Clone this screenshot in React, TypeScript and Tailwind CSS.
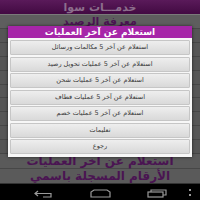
import React from "react";

const F = { fontFamily: '"DejaVu Sans", sans-serif' };

const buttons = [
  "استعلام عن آخر 5 مكالمات ورسائل",
  "استعلام عن آخر 5 عمليات تحويل رصيد",
  "استعلام عن آخر 5 عمليات شحن",
  "استعلام عن آخر 5 عمليات قطاف",
  "استعلام عن آخر 5 عمليات خصم",
  "تعليمات",
  "رجوع",
];

export default function App() {
  return (
    <div className="relative w-[200px] h-[200px] overflow-hidden bg-[#3a3a3a]" style={F} dir="rtl">
      <div className="flex flex-col h-[183px]">
        <div className="h-[14px] bg-gradient-to-b from-[#5a1a5a] to-[#420a42] flex items-center justify-center">
          <span className="text-[11px] leading-none font-bold text-[#8c6e8c]">خدمـــات سوا</span>
        </div>
        <div className="h-[1px] bg-[#7a7a7a]" />
        <div className="h-[14px] bg-[#5e5e5e] flex items-center justify-center border-b border-[#474747]">
          <span className="text-[11px] leading-none font-bold text-[#4a1452]">معرفة الرصيد</span>
        </div>
        <div className="flex-1 flex flex-col">
          {Array.from({ length: 9 }).map((_, i) => (
            <div key={i} className="flex-1 bg-[#555555] border-b border-[#454545]" />
          ))}
        </div>
        <div className="h-[15px] bg-[#5a5a5a] flex items-center justify-center border-b border-[#474747]">
          <span className="text-[12px] leading-none font-bold text-[#4a1452]">استعلام عن آخر العمليات</span>
        </div>
        <div className="h-[14px] bg-[#5a5a5a] flex items-center justify-center">
          <span className="text-[12px] leading-none font-bold text-[#4a1452]">الأرقام المسجلة باسمي</span>
        </div>
      </div>
      <div className="h-[17px] bg-black relative border-t border-[#333]">
        <svg className="absolute left-[34px] top-[6px]" width="20" height="8" viewBox="0 0 20 8" fill="none" stroke="#9a9a9a" strokeWidth="1.2">
          <path d="M4 1 L1 3.5 L4 6" />
          <path d="M1 3.5 H17 V7 H9" />
        </svg>
        <svg className="absolute left-[90px] top-[5px]" width="21" height="9" viewBox="0 0 21 9" fill="none" stroke="#9a9a9a" strokeWidth="1.2">
          <path d="M1 8 V3 L4 1 H17 L20 3 V8 Z" />
        </svg>
        <svg className="absolute left-[147px] top-[5px]" width="20" height="9" viewBox="0 0 20 9" fill="none" stroke="#9a9a9a" strokeWidth="1.2">
          <rect x="1" y="3" width="15" height="5" />
          <path d="M4 3 V1 H19 V6 H16" />
        </svg>
        <div className="absolute left-[189px] top-[5px] w-[2px] h-[7px] flex flex-col justify-between">
          <div className="w-[2px] h-[2px] bg-[#9a9a9a]" />
          <div className="w-[2px] h-[2px] bg-[#9a9a9a]" />
        </div>
      </div>

      <div className="absolute left-[8px] top-[26px] w-[184px] h-[131px] bg-[#f7f7f7] flex flex-col shadow-[0_0_3px_rgba(0,0,0,0.6)]">
        <div className="h-[12px] bg-[#a626a8] flex items-center justify-center">
          <span className="text-[9px] leading-none font-bold text-white">استعلام عن آخر العمليات</span>
        </div>
        <div className="flex flex-col gap-[1.5px] px-[2px] pt-[2px]">
          {buttons.map((b) => (
            <div
              key={b}
              className="h-[15px] bg-gradient-to-b from-[#eeeeee] to-[#d9d9d9] border border-[#c6c6c6] rounded-[1px] flex items-center justify-center"
            >
              <span className="text-[6.5px] leading-none text-[#3a3a3a]">{b}</span>
            </div>
          ))}
        </div>
      </div>
    </div>
  );
}
